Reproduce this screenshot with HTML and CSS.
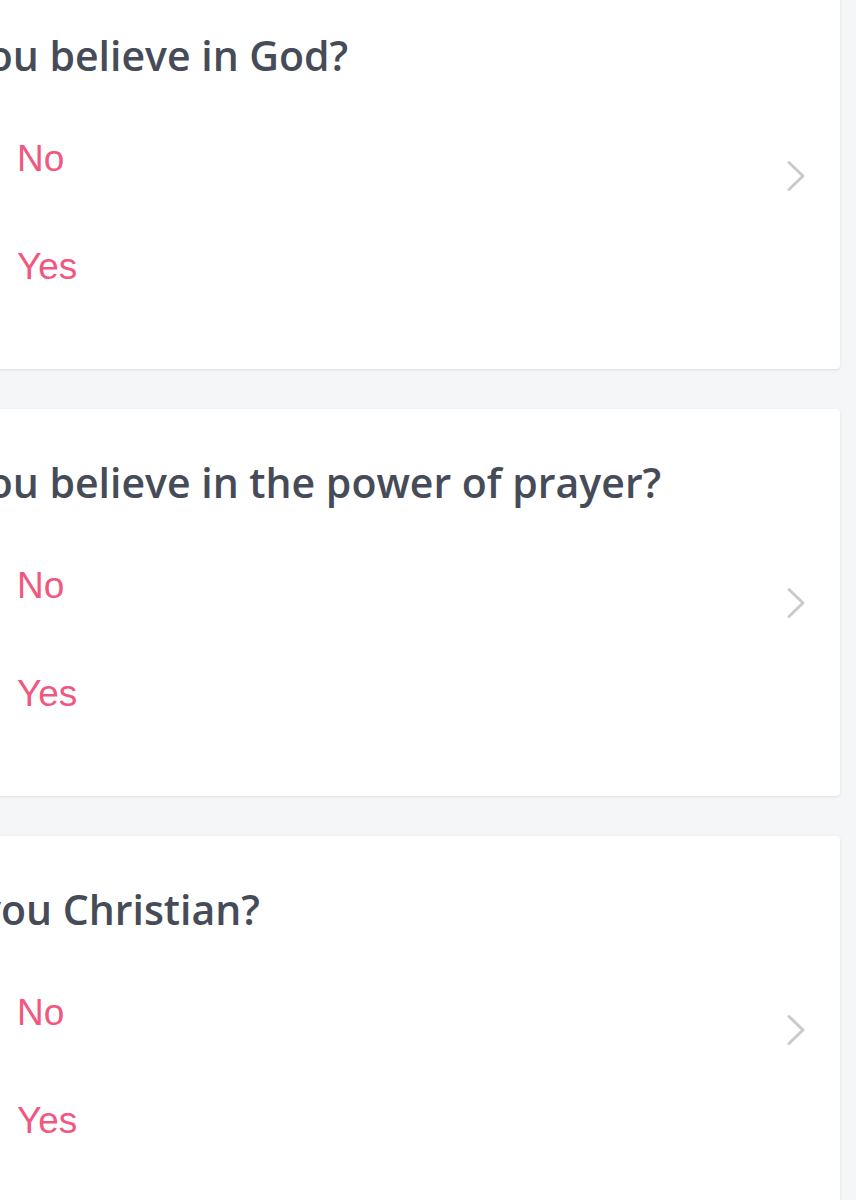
FILE: index.html
```html
<!DOCTYPE html>
<html lang="en">
<head>
  <meta charset="UTF-8" />
  <meta name="viewport" content="width=device-width, initial-scale=1.0"/>
  <title>Questions</title>
  <link rel="stylesheet" href="styles.css">
</head>
<body>
  <main class="question-list">
    <section class="question-card">
      <div class="question-body">
        <h2 class="question-title">Do you believe in God?</h2>
        <ul class="answer-list">
          <li class="answer">No</li>
          <li class="answer">Yes</li>
        </ul>
      </div>
      <svg class="chevron" width="20" height="32" viewBox="0 0 20 32" aria-hidden="true">
        <path d="M3 2.5 L17 16 L3 29.5" fill="none" stroke="currentColor" stroke-width="3" stroke-linecap="round" stroke-linejoin="round"/>
      </svg>
    </section>

    <section class="question-card">
      <div class="question-body">
        <h2 class="question-title">Do you believe in the power of prayer?</h2>
        <ul class="answer-list">
          <li class="answer">No</li>
          <li class="answer">Yes</li>
        </ul>
      </div>
      <svg class="chevron" width="20" height="32" viewBox="0 0 20 32" aria-hidden="true">
        <path d="M3 2.5 L17 16 L3 29.5" fill="none" stroke="currentColor" stroke-width="3" stroke-linecap="round" stroke-linejoin="round"/>
      </svg>
    </section>

    <section class="question-card">
      <div class="question-body">
        <h2 class="question-title">Are you Christian?</h2>
        <ul class="answer-list">
          <li class="answer">No</li>
          <li class="answer">Yes</li>
        </ul>
      </div>
      <svg class="chevron" width="20" height="32" viewBox="0 0 20 32" aria-hidden="true">
        <path d="M3 2.5 L17 16 L3 29.5" fill="none" stroke="currentColor" stroke-width="3" stroke-linecap="round" stroke-linejoin="round"/>
      </svg>
    </section>
  </main>
</body>
</html>
```

FILE: styles.css
```css
:root {
  --color-bg: #f5f6f8;
  --color-surface: #fff;
  --color-title: #464b58;
  --color-answer: #f0587f;
  --color-chevron: #c9cacd;
}

body {
  margin: 0;
  background: var(--color-bg);
  overflow: hidden;
}

.question-list {
  display: grid;
  gap: 40px;
  width: 960px;
  margin: -18px 0 0 -120px;
}

.question-card {
  display: flex;
  align-items: center;
  background: var(--color-surface);
  border-radius: 4px;
  box-shadow: 0 1px 3px rgba(0, 0, 0, 0.1);
  height: 387px;
  padding: 0 34px 0 0;
  box-sizing: border-box;
}

.question-body {
  flex: 1;
  align-self: stretch;
}

.question-title {
  margin: 0;
  padding: 45px 0 0 20px;
  font-family: "Open Sans", sans-serif;
  font-weight: 600;
  font-size: 41px;
  line-height: 56px;
  color: var(--color-title);
}

.answer-list {
  list-style: none;
  margin: 54px 0 0;
  padding: 0 0 0 137px;
  display: grid;
  gap: 65px;
}

.answer {
  font-family: "Liberation Sans", Arial, sans-serif;
  font-size: 37px;
  line-height: 43px;
  color: var(--color-answer);
}

.chevron {
  color: var(--color-chevron);
  flex-shrink: 0;
}
```
